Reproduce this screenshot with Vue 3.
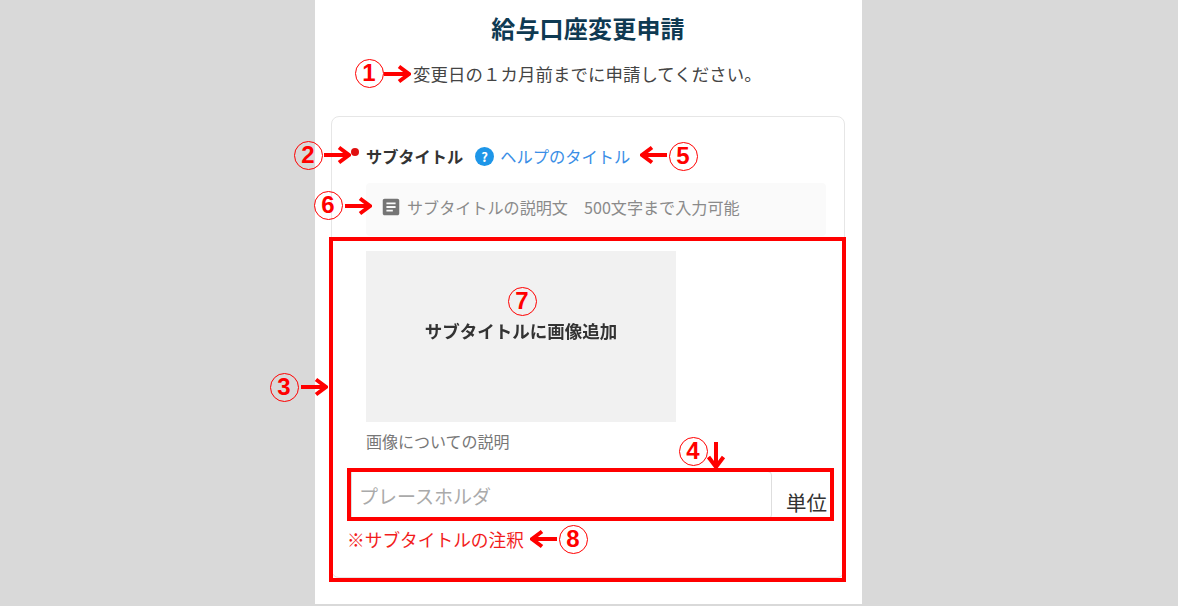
<template>
  <div class="page">
    <main class="sheet">
      <h1 class="page-title">給与口座変更申請</h1>
      <p class="lead">変更日の１カ月前までに申請してください。</p>

      <section class="card">
        <div class="label-row">
          <span class="required"></span>
          <span class="subtitle">サブタイトル</span>
          <span class="help-icon">?</span>
          <a class="help-link">ヘルプのタイトル</a>
        </div>

        <div class="desc">
          <svg class="desc-icon" viewBox="0 0 24 24" width="22" height="22">
            <path fill="#757575" d="M19 3H5c-1.1 0-2 .9-2 2v14c0 1.1.9 2 2 2h14c1.1 0 2-.9 2-2V5c0-1.1-.9-2-2-2zm-5 14H7v-2h7v2zm3-4H7v-2h10v2zm0-4H7V7h10v2z" />
          </svg>
          <span>サブタイトルの説明文　500文字まで入力可能</span>
        </div>

        <div class="image-box"><span>サブタイトルに画像追加</span></div>
        <p class="caption">画像についての説明</p>

        <div class="input-row">
          <input class="text-input" type="text" placeholder="プレースホルダ" />
          <span class="unit">単位</span>
        </div>
        <p class="note">※サブタイトルの注釈</p>
      </section>
    </main>

    <!-- 注釈レイヤー -->
    <div class="frame frame-content"></div>
    <div class="frame frame-input"></div>
    <span
      v-for="m in marks"
      :key="m.n"
      class="mark"
      :style="{ left: m.x - 14.5 + 'px', top: m.y - 14.5 + 'px' }"
    >{{ m.n }}</span>
    <svg
      v-for="a in arrows"
      :key="a.x + '-' + a.y"
      class="arrow"
      viewBox="0 0 28 20"
      width="28"
      height="20"
      :style="{ left: a.x - 14 + 'px', top: a.y - 10 + 'px', transform: `rotate(${a.deg}deg)` }"
    >
      <path d="M1 10H25M16 2.5l10 7.5-10 7.5" fill="none" stroke="#f00" stroke-width="4" />
    </svg>
  </div>
</template>

<script setup>
// 番号マーカーと矢印の位置
const marks = [
  { n: 1, x: 369, y: 73 },
  { n: 2, x: 308, y: 155 },
  { n: 3, x: 284, y: 387 },
  { n: 4, x: 693, y: 451 },
  { n: 5, x: 683, y: 156 },
  { n: 6, x: 328, y: 205 },
  { n: 7, x: 522, y: 301 },
  { n: 8, x: 573, y: 539 },
]

const arrows = [
  { x: 397, y: 74, deg: 0 },
  { x: 337, y: 155, deg: 0 },
  { x: 314, y: 387, deg: 0 },
  { x: 716, y: 455, deg: 90 },
  { x: 654, y: 155, deg: 180 },
  { x: 358, y: 206, deg: 0 },
  { x: 544, y: 539, deg: 180 },
]
</script>

<style>
html,
body {
  margin: 0;
  background: #d9d9d9;
}
</style>

<style scoped>
.page {
  position: relative;
  width: 1178px;
  height: 606px;
  overflow: hidden;
  font-family: "Noto Sans CJK JP", "Noto Sans", sans-serif;
}

.sheet {
  box-sizing: border-box;
  width: 547px;
  height: 604px;
  margin-left: 315px;
  padding: 10px 17px 0 16px;
  background: #fff;
}

.page-title {
  margin: 0;
  font-size: 24px;
  line-height: 36px;
  font-weight: 700;
  letter-spacing: 0.2px;
  text-align: center;
  color: #0f3a52;
}

.lead {
  margin: 16px 0 0 82px;
  font-size: 17.4px;
  line-height: 24px;
  letter-spacing: 0.1px;
  color: #444;
}

.card {
  box-sizing: border-box;
  height: 462px;
  margin-top: 30px;
  padding: 26px 18px 0 34px;
  border: 1px solid #e6e6e6;
  border-radius: 8px;
}

.label-row {
  position: relative;
  display: flex;
  align-items: center;
  height: 26px;
}

.required {
  position: absolute;
  left: -15px;
  top: 5px;
  width: 8px;
  height: 8px;
  border-radius: 50%;
  background: #e01010;
}

.subtitle {
  font-size: 16.2px;
  font-weight: 700;
  color: #333;
}

.help-icon {
  width: 19px;
  height: 19px;
  margin: 0 6px 0 12px;
  border-radius: 50%;
  background: #1e96e8;
  color: #fff;
  font-size: 13px;
  font-weight: 700;
  line-height: 19px;
  text-align: center;
}

.help-link {
  font-size: 16.3px;
  color: #3a8ee6;
}

.desc {
  box-sizing: border-box;
  display: flex;
  align-items: center;
  height: 53px;
  margin-top: 14px;
  padding: 0 0 5px 14px;
  border-radius: 4px;
  background: #fafafa;
  font-size: 16.1px;
  color: #8a8a8a;
}

.desc-icon {
  margin-right: 5px;
}

.image-box {
  display: flex;
  align-items: center;
  justify-content: center;
  width: 310px;
  height: 171px;
  margin-top: 15px;
  background: #f1f1f1;
}

.image-box span {
  margin-top: -12px;
  font-size: 17.5px;
  font-weight: 700;
  color: #333;
  filter: blur(0.7px);
}

.caption {
  margin: 7px 0 0;
  font-size: 16px;
  line-height: 24px;
  color: #777;
}

.input-row {
  display: flex;
  align-items: flex-end;
  margin: 18px 0 0 -15px;
}

.text-input {
  box-sizing: border-box;
  flex: none;
  width: 421px;
  height: 48px;
  padding: 0 8px 0 7px;
  border: 1px solid #dedede;
  border-radius: 0 4px 4px 0;
  outline: none;
  font-family: inherit;
  font-size: 19px;
}

.text-input::placeholder {
  color: #aaa;
}

.unit {
  flex: none;
  margin-bottom: 2px;
  margin-left: 14px;
  font-size: 20.5px;
  line-height: 30px;
  white-space: nowrap;
  color: #333;
}

.note {
  margin: 8px 0 0 -19px;
  font-size: 17.7px;
  line-height: 24px;
  white-space: nowrap;
  color: #f21c1c;
}

.frame {
  position: absolute;
  box-sizing: border-box;
  border: 4px solid #f00;
  pointer-events: none;
}

.frame-content {
  left: 329px;
  top: 237px;
  width: 517px;
  height: 345px;
}

.frame-input {
  left: 347px;
  top: 468px;
  width: 487px;
  height: 53px;
}

.mark {
  position: absolute;
  box-sizing: border-box;
  width: 29px;
  height: 29px;
  border: 1.5px solid #f00;
  border-radius: 50%;
  color: #f00;
  font-family: "Liberation Sans", sans-serif;
  font-size: 24px;
  font-weight: 700;
  line-height: 26px;
  text-align: center;
}

.arrow {
  position: absolute;
}
</style>
